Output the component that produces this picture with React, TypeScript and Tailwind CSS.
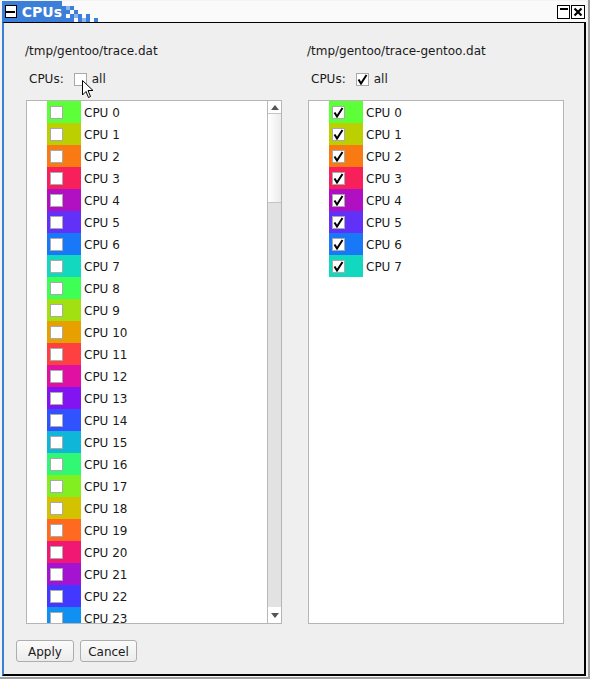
import React from "react";

const leftColors = [
  "#5cff38", "#bccf00", "#f97a12", "#f8205a", "#b110c2", "#6231f8", "#1878f8", "#12d8c0",
  "#3dff55", "#a2e012", "#e8a000", "#ff4040", "#e010a2", "#8214f2", "#3052ff", "#10b6d8",
  "#30f874", "#82f020", "#d2c200", "#ff6a20", "#f01872", "#a412d2", "#4238ff", "#1090f2",
];
const rightColors = leftColors.slice(0, 8);

const FONT = { fontFamily: '"DejaVu Sans", "Liberation Sans", sans-serif' };

function Box({ checked }: { checked?: boolean }) {
  return (
    <div className="w-[13px] h-[13px] border border-[#a9a9a9] bg-white flex items-center justify-center shrink-0">
      {checked && (
        <svg width="11" height="11" viewBox="0 0 11 11">
          <path d="M1.5 5.5 L4 9.5 L9.5 1" fill="none" stroke="#000" strokeWidth="2" strokeLinejoin="miter" />
        </svg>
      )}
    </div>
  );
}

function Row({ i, color, checked }: { i: number; color: string; checked?: boolean }) {
  return (
    <div className="h-[22px] flex items-center shrink-0">
      <div className="w-[20px] shrink-0" />
      <div className="w-[34px] h-full flex items-center pl-[3px] shrink-0" style={{ backgroundColor: color }}>
        <Box checked={checked} />
      </div>
      <span className="ml-[3px] mt-[1px] text-[12px] text-[#1a1a1a] whitespace-nowrap">CPU {i}</span>
    </div>
  );
}

function Scrollbar() {
  return (
    <div className="w-[14px] border-l border-[#b9b9b9] flex flex-col shrink-0">
      <div className="h-[13px] bg-white border-b border-[#c4c4c4] flex items-center justify-center">
        <svg width="8" height="5" viewBox="0 0 8 5"><path d="M0 5 L4 0 L8 5 Z" fill="#555" /></svg>
      </div>
      <div className="h-[89px] border-b border-[#c4c4c4] bg-gradient-to-r from-white to-[#ececec]" />
      <div className="flex-1 bg-[#e2e2e2]" />
      <div className="h-[16px] bg-white flex items-center justify-center">
        <svg width="8" height="5" viewBox="0 0 8 5"><path d="M0 0 L4 5 L8 0 Z" fill="#555" /></svg>
      </div>
    </div>
  );
}

function Column({ file, all, colors, checked, scroll }: { file: string; all?: boolean; colors: string[]; checked?: boolean; scroll?: boolean }) {
  return (
    <div className="w-[256px] flex flex-col">
      <div className="h-[16px] leading-[16px] text-[12px] text-[#1a1a1a] -ml-[1px]">{file}</div>
      <div className="h-[16px] mt-[12px] flex items-center text-[12px] text-[#1a1a1a] pl-[3px]">
        <span>CPUs:</span>
        <div className="ml-[10px]"><Box checked={all} /></div>
        <span className="ml-[5px]">all</span>
      </div>
      <div className="mt-[13px] h-[524px] border border-[#b5b5b5] bg-white flex overflow-hidden">
        <div className="flex-1 flex flex-col overflow-hidden">
          {colors.map((c, i) => (
            <Row key={i} i={i} color={c} checked={checked} />
          ))}
        </div>
        {scroll && <Scrollbar />}
      </div>
    </div>
  );
}

export default function App() {
  return (
    <div className="w-[590px] h-[679px] bg-[#f3f3f3] pl-[2px] pt-[1px] pr-[2px] pb-[1px] border-r-2 border-b-2 border-[#9e9e9e] relative overflow-hidden" style={FONT}>
      <div className="w-full h-full flex flex-col">
        {/* title bar */}
        <div className="h-[21px] flex items-stretch bg-[#fafafa] shrink-0">
          <div className="w-[60px] bg-[#3c7fdb] flex items-center pl-[3px]">
            <div className="w-[13px] h-[13px] bg-white border border-black flex items-center justify-center">
              <div className="w-[9px] h-[2px] bg-black" />
            </div>
            <span className="ml-[5px] text-[14px] font-bold text-white leading-none">CPUs</span>
          </div>
          <svg width="38" height="21" viewBox="0 0 38 21" className="shrink-0">
            <g fill="#3c7fdb">
              <rect x="0" y="5" width="4" height="16" />
              <rect x="8" y="5" width="4" height="4" />
              <rect x="4" y="9" width="4" height="4" />
              <rect x="12" y="9" width="4" height="4" />
              <rect x="8" y="13" width="4" height="4" />
              <rect x="16" y="13" width="4" height="4" />
              <rect x="24" y="13" width="4" height="4" />
              <rect x="4" y="17" width="8" height="4" />
              <rect x="16" y="17" width="4" height="4" />
              <rect x="24" y="17" width="4" height="4" />
              <rect x="32" y="17" width="4" height="4" />
            </g>
            <g fill="#8cb6ee">
              <rect x="4" y="5" width="4" height="4" />
              <rect x="12" y="13" width="4" height="4" />
              <rect x="20" y="17" width="4" height="4" />
            </g>
          </svg>
          <div className="flex-1" />
          <div className="flex items-center gap-[1px] pr-[1px] pt-[1px]">
            <div className="w-[13px] h-[14px] border border-black bg-white flex items-start justify-center pt-[2px]">
              <div className="w-[8px] h-[2px] bg-black" />
            </div>
            <div className="w-[14px] h-[14px] border border-black bg-white flex items-center justify-center">
              <svg width="10" height="10" viewBox="0 0 10 10">
                <path d="M1.5 1.5 L8.5 8.5 M8.5 1.5 L1.5 8.5" stroke="#000" strokeWidth="2.2" />
              </svg>
            </div>
          </div>
        </div>
        {/* body */}
        <div className="flex-1 flex flex-col bg-[#efefef] border-t border-t-black border-l-2 border-l-[#3c7fdb] border-r-2 border-r-black border-b-2 border-b-black">
          <div className="flex gap-[26px] pl-[22px] pt-[20px]">
            <Column file="/tmp/gentoo/trace.dat" colors={leftColors} scroll />
            <Column file="/tmp/gentoo/trace-gentoo.dat" all colors={rightColors} checked />
          </div>
          <div className="flex gap-[6px] pl-[12px] mt-[16px]">
            <button className="w-[58px] h-[22px] rounded-[3px] border border-[#adadad] bg-gradient-to-b from-[#fbfbfb] to-[#ececec] text-[12px] text-[#1a1a1a] leading-none pt-[1px]">Apply</button>
            <button className="w-[57px] h-[22px] rounded-[3px] border border-[#adadad] bg-gradient-to-b from-[#fbfbfb] to-[#ececec] text-[12px] text-[#1a1a1a] leading-none pt-[1px]">Cancel</button>
          </div>
        </div>
      </div>
      {/* mouse cursor */}
      <svg className="absolute left-[82px] top-[80px]" width="12" height="19" viewBox="0 0 12 19">
        <path d="M0.5 0.5 L0.5 15 L4 11.5 L6.5 17.5 L8.5 16.5 L6 10.5 L11 10.5 Z" fill="#fff" stroke="#000" strokeWidth="1" strokeLinejoin="miter" />
      </svg>
    </div>
  );
}
